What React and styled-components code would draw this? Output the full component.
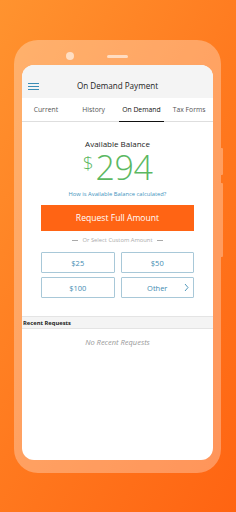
import React from 'react';
import styled, { createGlobalStyle } from 'styled-components';

const GlobalStyle = createGlobalStyle`
  html, body {
    margin: 0;
    padding: 0;
  }
  body {
    font-family: "Open Sans", "Noto Sans", sans-serif;
  }
`;

const Page = styled.div`
  width: 236px;
  height: 512px;
  overflow: hidden;
  background: linear-gradient(120deg, #ff932f 0%, #ff7a1f 50%, #ff6412 100%);
  padding: 40px 15px 0 14px;
  box-sizing: border-box;
`;

const Phone = styled.div`
  position: relative;
  width: 207px;
  height: 433px;
  box-sizing: border-box;
  padding: 25px 8px 13px 8px;
  border-radius: 24px;
  background: rgba(255, 255, 255, 0.3);
`;

const SideKey = styled.div`
  position: absolute;
  right: -2px;
  top: ${p => p.top}px;
  width: 2px;
  height: ${p => p.h}px;
  background: rgba(255, 255, 255, 0.3);
  border-radius: 0 1px 1px 0;
`;

const Camera = styled.div`
  position: absolute;
  left: 52px;
  top: 12px;
  width: 8px;
  height: 8px;
  border-radius: 50%;
  background: rgba(255, 255, 255, 0.6);
`;

const Speaker = styled.div`
  position: absolute;
  left: 93px;
  top: 15px;
  width: 21px;
  height: 2.5px;
  border-radius: 2px;
  background: rgba(255, 255, 255, 0.6);
`;

const Screen = styled.div`
  height: 100%;
  background: #fff;
  border-radius: 12px;
  overflow: hidden;
  display: flex;
  flex-direction: column;
`;

const Header = styled.div`
  height: 33px;
  background: #f4f4f4;
  display: flex;
  align-items: center;
  position: relative;
  justify-content: center;
`;

const Burger = styled.div`
  position: absolute;
  left: 6px;
  top: 18px;
  width: 11px;
  display: flex;
  flex-direction: column;
  gap: 2px;
  span {
    display: block;
    height: 1px;
    background: #3b8db5;
  }
`;

const Title = styled.div`
  font-size: 8.1px;
  color: #222;
  margin-top: 7px;
`;

const Tabs = styled.div`
  display: flex;
  height: 23px;
  border-bottom: 1px solid #dedede;
`;

const Tab = styled.div`
  flex: 1;
  display: flex;
  align-items: center;
  justify-content: center;
  font-size: 6.8px;
  color: ${p => (p.active ? '#111' : '#555')};
  position: relative;
  &::after {
    content: '';
    display: ${p => (p.active ? 'block' : 'none')};
    position: absolute;
    left: 1px;
    right: 1px;
    bottom: -1px;
    height: 1.5px;
    background: #111;
  }
`;

const Body = styled.div`
  display: flex;
  flex-direction: column;
  align-items: center;
  padding: 0 19px;
`;

const BalanceLabel = styled.div`
  font-size: 8px;
  color: #222;
  margin-top: 16px;
  line-height: 11px;
`;

const Amount = styled.div`
  display: flex;
  align-items: flex-start;
  color: #5bb862;
  font-weight: 300;
  margin-top: 2px;
  height: 32px;
`;

const Dollar = styled.span`
  font-size: 19px;
  line-height: 19px;
  margin-top: 3px;
  margin-right: 2px;
`;

const Digits = styled.span`
  font-size: 34px;
  line-height: 32px;
  letter-spacing: -0.5px;
`;

const InfoLink = styled.div`
  font-size: 5.8px;
  color: #3f93bd;
  margin-top: 7px;
`;

const PrimaryButton = styled.div`
  align-self: stretch;
  margin-top: 7px;
  height: 26px;
  background: #ff6414;
  color: #fff;
  font-size: 8.6px;
  display: flex;
  align-items: center;
  justify-content: center;
`;

const Divider = styled.div`
  display: flex;
  align-items: center;
  gap: 5px;
  font-size: 5.8px;
  color: #aaa;
  margin-top: 5px;
  &::before, &::after {
    content: '';
    width: 6px;
    height: 1px;
    background: #aaa;
  }
`;

const AmountGrid = styled.div`
  align-self: stretch;
  display: grid;
  grid-template-columns: 1fr 1fr;
  gap: 4px 6px;
  margin-top: 8px;
`;

const AmountButton = styled.div`
  position: relative;
  height: 21px;
  box-sizing: border-box;
  border: 1px solid #a8c8d8;
  border-radius: 1px;
  color: #3f8cb2;
  font-size: 7.5px;
  display: flex;
  align-items: center;
  justify-content: center;
`;

const Chevron = styled.span`
  position: absolute;
  right: 4px;
  top: 5px;
  display: flex;
`;

const SectionBar = styled.div`
  margin-top: 18px;
  height: 11px;
  background: #f4f4f4;
  border-top: 1px solid #e4e4e4;
  border-bottom: 1px solid #e4e4e4;
  font-size: 5.8px;
  font-weight: 700;
  color: #222;
  display: flex;
  align-items: center;
  padding-left: 1px;
`;

const Empty = styled.div`
  text-align: center;
  font-size: 7.5px;
  font-style: italic;
  color: #999;
  margin-top: 8px;
`;

const tabs = ['Current', 'History', 'On Demand', 'Tax Forms'];
const amounts = ['$25', '$50', '$100'];

export default function App() {
  return (
    <>
      <GlobalStyle />
      <Page>
        <Phone>
          <Camera />
          <Speaker />
          <SideKey top={108} h={27} />
          <SideKey top={143} h={74} />
          <Screen>
            <Header>
              <Burger>
                <span />
                <span />
                <span />
              </Burger>
              <Title>On Demand Payment</Title>
            </Header>
            <Tabs>
              {tabs.map(t => (
                <Tab key={t} active={t === 'On Demand'}>{t}</Tab>
              ))}
            </Tabs>
            <Body>
              <BalanceLabel>Available Balance</BalanceLabel>
              <Amount>
                <Dollar>$</Dollar>
                <Digits>294</Digits>
              </Amount>
              <InfoLink>How is Available Balance calculated?</InfoLink>
              <PrimaryButton>Request Full Amount</PrimaryButton>
              <Divider>Or Select Custom Amount</Divider>
              <AmountGrid>
                {amounts.map(a => (
                  <AmountButton key={a}>{a}</AmountButton>
                ))}
                <AmountButton>
                  Other
                  <Chevron>
                    <svg width="5" height="9" viewBox="0 0 5 9">
                      <path d="M1 1l3 3.5L1 8" fill="none" stroke="#3f8cb2" strokeWidth="0.9" />
                    </svg>
                  </Chevron>
                </AmountButton>
              </AmountGrid>
            </Body>
            <SectionBar>Recent Requests</SectionBar>
            <Empty>No Recent Requests</Empty>
          </Screen>
        </Phone>
      </Page>
    </>
  );
}
